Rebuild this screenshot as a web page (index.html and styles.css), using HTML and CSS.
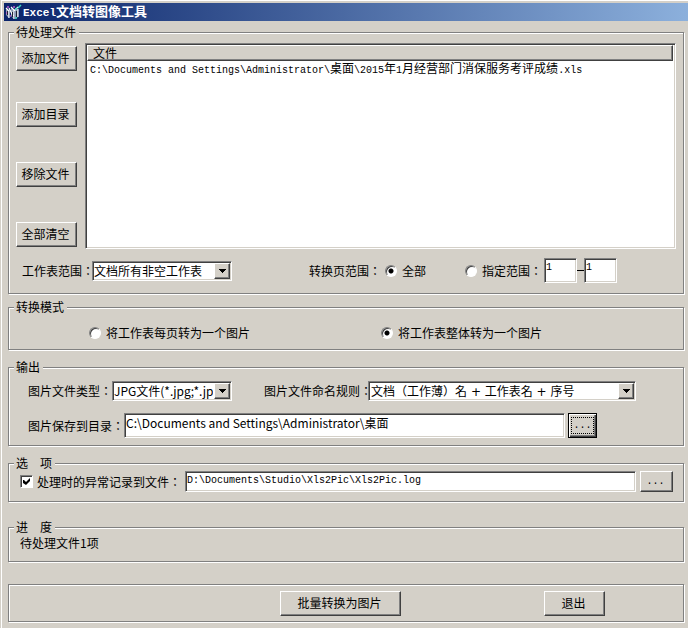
FILE: index.html
```html
<!DOCTYPE html>
<html lang="zh-CN">
<head>
<meta charset="utf-8">
<title>Excel文档转图像工具</title>
<link rel="stylesheet" href="styles.css">
</head>
<body>
<div class="window">
  <header class="titlebar">
    <svg class="app-icon" width="17" height="16" viewBox="0 0 17 16" aria-hidden="true">
      <path d="M1 5l3 2v7l-3-3zM6 4l3 2v9l-3-3zM10 6l3-1v8l-3 2z" fill="#8c9cb4"/>
      <path d="M1 4l3 3v7M4 4l4 8M6 3l3 3v9M9 7l4-4M13 5v8" fill="none" stroke="#fff" stroke-width="1.2"/>
      <path d="M2.500 7v4M7.500 8v5M11.500 7v6" stroke="#223" stroke-width="1"/>
      <path d="M2 3h2M8 3h2M1 9h1M5 12h1" stroke="#c05ad0" stroke-width="1.4"/>
      <path d="M13 4l3-3M10 5h2M10 14h2" stroke="#3fd6c0" stroke-width="1.5"/>
    </svg>
    <h1><span class="title-latin">Excel</span>文档转图像工具</h1>
  </header>

  <main class="content">
    <fieldset class="group files">
      <legend>待处理文件</legend>
      <div class="file-area">
        <div class="file-actions">
          <button type="button">添加文件</button>
          <button type="button">添加目录</button>
          <button type="button">移除文件</button>
          <button type="button">全部清空</button>
        </div>
        <div class="file-list">
          <table>
            <thead><tr><th>文件</th></tr></thead>
            <tbody><tr><td><span class="mono">C:\Documents and Settings\Administrator\</span>桌面<span class="mono">\2015</span>年<span class="mono">1</span>月经营部门消保服务考评成绩<span class="mono">.xls</span></td></tr></tbody>
          </table>
        </div>
      </div>
      <div class="row range-row">
        <label for="sheets">工作表范围<span class="colon" lang="zh-Hant">：</span></label>
        <span class="select sheets">
          <select id="sheets"><option>文档所有非空工作表</option></select>
          <svg class="arrow" viewBox="0 0 14 14" aria-hidden="true"><path d="M4 5h7v1h-1v1h-1v1h-1v1h-1v-1h-1v-1h-1v-1h-1z"/></svg>
        </span>
        <span class="pages-label">转换页范围<span class="colon" lang="zh-Hant">：</span></span>
        <label class="choice all"><input type="radio" name="pages" checked>全部</label>
        <label class="choice span"><input type="radio" name="pages"><span>指定范围<span class="colon" lang="zh-Hant">：</span></span></label>
        <input class="field page" type="text" value="1" aria-label="起始页">
        <span class="dash"></span>
        <input class="field page" type="text" value="1" aria-label="结束页">
      </div>
    </fieldset>

    <fieldset class="group mode">
      <legend>转换模式</legend>
      <div class="mode-row">
        <label class="choice"><input type="radio" name="mode">将工作表每页转为一个图片</label>
        <label class="choice"><input type="radio" name="mode" checked>将工作表整体转为一个图片</label>
      </div>
    </fieldset>

    <fieldset class="group output">
      <legend>输出</legend>
      <div class="row format-row">
        <label for="type">图片文件类型<span class="colon" lang="zh-Hant">：</span></label>
        <span class="select type">
          <select id="type"><option>JPG文件(*.jpg;*.jpeg)</option></select>
          <svg class="arrow" viewBox="0 0 14 14" aria-hidden="true"><path d="M4 5h7v1h-1v1h-1v1h-1v1h-1v-1h-1v-1h-1v-1h-1z"/></svg>
        </span>
        <label class="naming-label" for="naming">图片文件命名规则<span class="colon" lang="zh-Hant">：</span></label>
        <span class="select naming">
          <select id="naming" lang="zh-Hant"><option>文档（工作薄）名 + 工作表名 + 序号</option></select>
          <svg class="arrow" viewBox="0 0 14 14" aria-hidden="true"><path d="M4 5h7v1h-1v1h-1v1h-1v1h-1v-1h-1v-1h-1v-1h-1z"/></svg>
        </span>
      </div>
      <div class="row save-row">
        <label for="dir">图片保存到目录<span class="colon" lang="zh-Hant">：</span></label>
        <input class="field grow" id="dir" type="text" value="C:\Documents and Settings\Administrator\桌面">
        <button class="browse focused" type="button" aria-label="选择目录"><span>...</span></button>
      </div>
    </fieldset>

    <fieldset class="group options">
      <legend>选　项</legend>
      <div class="row log-row">
        <input class="check" id="log" type="checkbox" checked>
        <label for="log">处理时的异常记录到文件<span class="colon" lang="zh-Hant">：</span></label>
        <input class="field grow log-file" type="text" value="D:\Documents\Studio\Xls2Pic\Xls2Pic.log" aria-label="日志文件">
        <button class="browse" type="button" aria-label="选择日志文件">...</button>
      </div>
    </fieldset>

    <fieldset class="group progress">
      <legend>进　度</legend>
      <p>待处理文件1项</p>
    </fieldset>

    <div class="group footer">
      <button class="convert" type="button">批量转换为图片</button>
      <button class="quit" type="button">退出</button>
    </div>
  </main>
</div>
</body>
</html>
```

FILE: styles.css
```css
* { box-sizing: border-box; }

body {
  margin: 0;
  background: #d4d0c8;
  color: #000;
  font: 12px/16px "Noto Sans CJK SC", sans-serif;
}

button, input, select { font: inherit; color: inherit; margin: 0; }

.window {
  min-height: 100vh;
  padding: 3px 0 0 2px;
  border-left: 1px solid #d4d0c8;
  box-shadow: inset 1px 1px 0 #fff;
}

.titlebar {
  display: flex;
  align-items: center;
  gap: 1px;
  height: 18px;
  margin-left: 1px;
  padding-left: 1px;
  background: linear-gradient(to right, #0a246a, #8cb0dc);
  color: #fff;
}

.titlebar h1 { margin: 0; font-size: 13px; line-height: 18px; font-weight: bold; }
.title-latin { font-family: "Liberation Mono", monospace; font-size: 11px; }
.mono { font-family: "Liberation Mono", monospace; font-size: 10px; line-height: 1; }
.colon { font-family: "Noto Sans CJK TC", sans-serif; }

.content { padding: 3px 4px 5px 5px; }

.group {
  min-width: 0;
  margin: 0;
  padding: 0 7px;
  border: 1px solid #808080;
  box-shadow: 1px 1px 0 #fff, inset 1px 1px 0 #fff;
}

.group legend { padding: 0 3px 0 2px; margin-left: -2px; background: #d4d0c8; }

button {
  height: 25px;
  padding: 0 2px 1px 0;
  border: 1px solid;
  border-color: #fff #404040 #404040 #fff;
  background: #d4d0c8;
  box-shadow: inset -1px -1px 0 #808080;
  white-space: nowrap;
}

.row { display: flex; align-items: center; white-space: nowrap; }

/* File list */
.files { height: 270px; }
.file-area { display: flex; gap: 8px; padding-top: 3px; }
.file-actions { display: grid; grid-template-rows: 56px 60px 60px 25px; width: 61px; padding-top: 3px; }

.file-list {
  flex: 1;
  height: 206px;
  border: 1px solid;
  border-color: #808080 #fff #fff #808080;
  background: #fff;
  box-shadow: inset 1px 1px 0 #404040, inset -1px -1px 0 #d4d0c8;
  padding: 1px 2px 1px 1px;
}

.file-list table { width: 100%; border-collapse: separate; border-spacing: 0; }
.file-list th {
  height: 16px;
  padding: 0 5px;
  border: 1px solid;
  border-color: #fff #404040 #404040 #fff;
  background: #d4d0c8;
  box-shadow: inset -1px -1px 0 #808080;
  font-weight: normal;
  line-height: 14px;
  text-align: left;
}
.file-list td { padding: 0 3px; line-height: 13px; }

.range-row { padding: 9px 59px 0 6px; }
.pages-label { margin-left: auto; }
.all { margin: 0 39px 0 4px; }
.span { margin-right: 2px; }

/* Form controls */
.select { position: relative; display: block; }
.select select {
  appearance: none;
  display: block;
  width: 100%;
  height: 20px;
  padding: 0 18px 0 1px;
  border: 1px solid;
  border-color: #808080 #fff #fff #808080;
  border-radius: 0;
  background: #fff;
  box-shadow: inset 1px 1px 0 #404040, inset -1px -1px 0 #d4d0c8;
  line-height: 16px;
  overflow: hidden;
}
.arrow {
  position: absolute;
  top: 2px;
  right: 2px;
  width: 16px;
  height: 16px;
  border: 1px solid;
  border-color: #fff #404040 #404040 #fff;
  background: #d4d0c8;
  box-shadow: inset -1px -1px 0 #808080;
  shape-rendering: crispEdges;
  pointer-events: none;
}
.sheets { width: 140px; margin-left: -2px; }
.type { width: 120px; }
.naming { width: 268px; margin-left: -4px; }
.naming select { padding-top: 1px; padding-left: 2px; font-family: "DejaVu Sans", "Noto Sans CJK TC", sans-serif; }

.field {
  min-width: 0;
  height: 25px;
  padding: 0 2px 6px 1px;
  border: 1px solid;
  border-color: #808080 #fff #fff #808080;
  border-radius: 0;
  background: #fff;
  box-shadow: inset 1px 1px 0 #404040, inset -1px -1px 0 #d4d0c8;
}
.grow { flex: 1; }
.page { width: 33px; font-family: "Liberation Mono", monospace; font-size: 10px; }
.dash { width: 7px; height: 1px; background: #000; }

.choice { display: flex; align-items: center; gap: 5px; }
input[type="radio"] {
  appearance: none;
  width: 12px;
  height: 12px;
  border: 1px solid;
  border-color: #808080 #fff #fff #808080;
  border-radius: 50%;
  background: #fff;
  box-shadow: inset 1px 1px 0 #404040;
}
input[type="radio"]:checked { background: radial-gradient(circle at center, #000 2px, #fff 3px); }

.check {
  appearance: none;
  width: 13px;
  height: 13px;
  border: 1px solid;
  border-color: #808080 #fff #fff #808080;
  background: #fff;
  box-shadow: inset 1px 1px 0 #404040;
}
.check:checked::before {
  content: "";
  display: block;
  width: 7px;
  height: 7px;
  margin: 2px 0 0 2px;
  background: #000;
  clip-path: polygon(0 2px, 1px 2px, 3px 4px, 7px 0, 7px 3px, 3px 7px, 0 5px);
}

/* Conversion mode */
.mode { height: 51px; margin-top: 5px; }
.mode-row { display: grid; grid-template-columns: 292px auto; padding: 10px 0 0 73px; }

/* Output */
.output { height: 87px; margin-top: 9px; }
.format-row { padding: 6px 0 0 12px; }
.naming-label { margin-left: 32px; }
.save-row { padding: 12px 79px 0 12px; }
.browse {
  width: 33px;
  height: 21px;
  margin-left: 3px;
  padding: 0 2px 0 0;
  font-family: "Liberation Mono", monospace;
  font-size: 10px;
}
.focused {
  width: 29px;
  height: 25px;
  padding: 2px;
  border-color: #000;
  box-shadow: inset 1px 1px 0 #fff, inset -1px -1px 0 #404040, inset -2px -2px 0 #808080;
}
.focused span { display: block; height: 17px; border: 1px dotted #000; line-height: 16px; }

/* Options */
.options { height: 47px; margin-top: 9px; }
.log-row { padding: 0 3px 0 4px; gap: 4px; }
.log-row .browse { margin: 0; }
.log-file {
  height: 21px;
  padding-bottom: 3px;
  font-family: "Liberation Mono", monospace;
  font-size: 10px;
}

/* Progress */
.progress { height: 43px; margin-top: 17px; }
.progress p { margin: 0 0 0 4px; }

/* Bottom bar */
.footer {
  display: flex;
  align-items: center;
  justify-content: flex-end;
  gap: 143px;
  height: 38px;
  margin-top: 22px;
  padding-right: 78px;
}
.convert { width: 121px; }
.quit { width: 61px; }
```
